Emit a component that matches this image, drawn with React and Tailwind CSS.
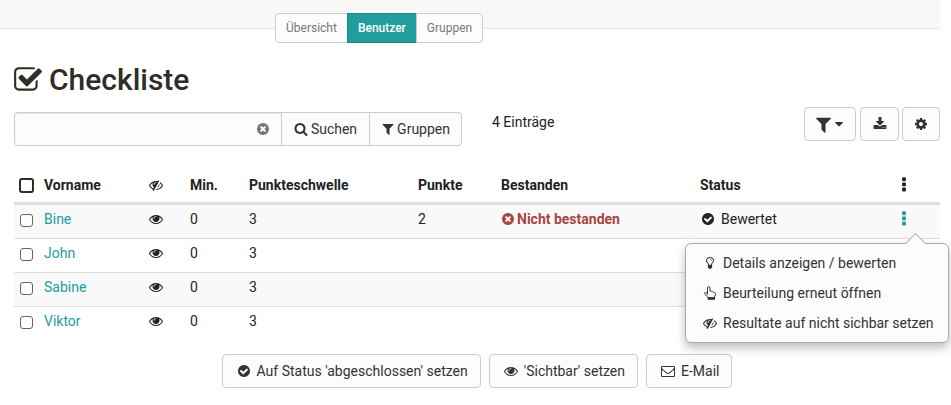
import React from "react";

const CIRCLE =
  "m0 0M1664 896q0 209-103 385.5t-279.5 279.5-385.5 103-385.5-103-279.5-279.5-103-385.5 103-385.5 279.5-279.5 385.5-103 385.5 103 279.5 279.5 103 385.5z";

const ICONS = {
  eye: "M1664 960q-152-236-381-353 61 104 61 225 0 185-131.5 316.5t-316.5 131.5-316.5-131.5-131.5-316.5q0-121 61-225-229 117-381 353 133 205 333.5 326.5t434.5 121.5 434.5-121.5 333.5-326.5zm-720-384q0-20-14-34t-34-14q-125 0-214.5 89.5t-89.5 214.5q0 20 14 34t34 14 34-14 14-34q0-86 61-147t147-61q20 0 34-14t14-34zm848 384q0 34-20 69-140 230-376.5 368.5t-499.5 138.5-499.5-139-376.5-368q-20-35-20-69t20-69q140-229 376.5-368t499.5-139 499.5 139 376.5 368q20 35 20 69z",
  eyeSlash:
    "M555 1335l78-141q-87-63-136-159t-49-203q0-121 61-225-229 117-381 353 167 258 427 375zm389-759q0-20-14-34t-34-14q-125 0-214.5 89.5t-89.5 214.5q0 20 14 34t34 14 34-14 14-34q0-86 61-147t147-61q20 0 34-14t14-34zm363-191q0 7-1 9-106 189-316 567t-315 566l-49 89q-10 16-28 16-12 0-134-70-16-10-16-28 0-12 44-87-143-65-263.5-173t-208.5-245q-20-31-20-69t20-69q153-235 380-371t496-136q89 0 180 17l54-97q10-16 28-16 5 0 18 6t31 15.5 33 18.5 31.5 18.5 19.5 11.5q16 10 16 27zm37 447q0 139-79 253.5t-209 164.5l280-502q8 45 8 84zm448 128q0 35-20 69-39 64-109 145-150 172-347.5 267t-419.5 95l74-132q212-18 392.5-137t301.5-307q-115-179-282-294l63-112q95 64 182.5 153t144.5 184q20 34 20 69z",
  checkSquare:
    "M1472 930v318q0 119-84.5 203.5t-203.5 84.5h-832q-119 0-203.5-84.5t-84.5-203.5v-832q0-119 84.5-203.5t203.5-84.5h832q63 0 117 25 15 7 18 23 3 17-9 29l-49 49q-10 10-23 10-3 0-9-2-23-6-45-6h-832q-66 0-113 47t-47 113v832q0 66 47 113t113 47h832q66 0 113-47t47-113v-254q0-13 9-22l64-64q10-10 23-10 6 0 12 3 20 8 20 29zm231-489l-814 814q-24 24-57 24t-57-24l-430-430q-24-24-24-57t24-57l110-110q24-24 57-24t57 24l263 263 647-647q24-24 57-24t57 24l110 110q24 24 24 57t-24 57z",
  timesCircle:
    "M1277 1122q0-26-19-45l-181-181 181-181q19-19 19-45 0-27-19-46l-90-90q-19-19-46-19-26 0-45 19l-181 181-181-181q-19-19-45-19-27 0-46 19l-90 90q-19 19-19 46 0 26 19 45l181 181-181 181q-19 19-19 45 0 27 19 46l90 90q19 19 46 19 26 0 45-19l181-181 181 181q19 19 45 19 27 0 46-19l90-90q19-19 19-46z" +
    CIRCLE,
  checkCircle:
    "M1412 734q0-28-18-46l-91-90q-19-19-45-19t-45 19l-408 407-226-226q-19-19-45-19t-45 19l-91 90q-18 18-18 46 0 27 18 45l362 362q19 19 45 19 27 0 46-19l543-543q18-18 18-45z" +
    CIRCLE,
  search:
    "M1216 832q0-185-131.5-316.5t-316.5-131.5-316.5 131.5-131.5 316.5 131.5 316.5 316.5 131.5 316.5-131.5 131.5-316.5zm512 832q0 52-38 90t-90 38q-54 0-90-38l-343-342q-179 124-399 124-143 0-273.5-55.5t-225-150-150-225-55.5-273.5 55.5-273.5 150-225 225-150 273.5-55.5 273.5 55.5 225 150 150 225 55.5 273.5q0 220-124 399l343 343q37 37 37 90z",
  filter:
    "M1595 295q17 41-14 70l-493 493v742q0 42-39 59-13 5-25 5-27 0-45-19l-256-256q-19-19-19-45v-486l-493-493q-31-29-14-70 17-39 59-39h1280q42 0 59 39z",
  download:
    "M1344 1344q0-26-19-45t-45-19-45 19-19 45 19 45 45 19 45-19 19-45zm256 0q0-26-19-45t-45-19-45 19-19 45 19 45 45 19 45-19 19-45zm128-224v320q0 40-28 68t-68 28h-1472q-40 0-68-28t-28-68v-320q0-40 28-68t68-28h465l135 136q58 56 136 56t136-56l136-136h464q40 0 68 28t28 68zm-325-569q17 41-14 70l-448 448q-18 19-45 19t-45-19l-448-448q-31-29-14-70 17-39 59-39h256v-448q0-26 19-45t45-19h256q26 0 45 19t19 45v448h256q42 0 59 39z",
  cog: "M1152 896q0-106-75-181t-181-75-181 75-75 181 75 181 181 75 181-75 75-181zm512-109v222q0 12-8 23t-20 13l-185 28q-19 54-39 91 35 50 107 138 10 12 10 25t-9 23q-27 37-99 108t-94 71q-12 0-26-9l-138-108q-44 23-91 38-16 136-29 186-7 28-36 28h-222q-14 0-24.5-8.5t-11.5-21.5l-28-184q-49-16-90-37l-141 107q-10 9-25 9-14 0-25-11-126-114-165-168-7-10-7-23 0-12 8-23 15-21 51-66.5t54-70.5q-27-50-41-99l-183-27q-13-2-21-12.5t-8-23.5v-222q0-12 8-23t19-13l186-28q14-46 39-92-40-57-107-138-10-12-10-24 0-10 9-23 26-36 98.5-107.5t94.5-71.5q13 0 26 10l138 107q44-23 91-38 16-136 29-186 7-28 36-28h222q14 0 24.5 8.5t11.5 21.5l28 184q49 16 90 37l142-107q9-9 24-9 13 0 25 10 129 119 165 170 7 8 7 22 0 12-8 23-15 21-51 66.5t-54 70.5q26 50 41 98l183 28q13 2 21 12.5t8 23.5z",
  ellipsis:
    "M1088 1248v192q0 40-28 68t-68 28h-192q-40 0-68-28t-28-68v-192q0-40 28-68t68-28h192q40 0 68 28t28 68zm0-512v192q0 40-28 68t-68 28h-192q-40 0-68-28t-28-68v-192q0-40 28-68t68-28h192q40 0 68 28t28 68zm0-512v192q0 40-28 68t-68 28h-192q-40 0-68-28t-28-68v-192q0-40 28-68t68-28h192q40 0 68 28t28 68z",
  envelope:
    "M1664 1504v-768q-32 36-69 66-268 206-426 338-51 43-83 67t-86.5 48.5-102.5 24.5h-2q-48 0-102.5-24.5t-86.5-48.5-83-67q-158-132-426-338-37-30-69-66v768q0 13 9.5 22.5t22.5 9.5h1472q13 0 22.5-9.5t9.5-22.5zm0-1051v-24.5l-.5-13-3-12.5-5.5-9-9-7.5-14-2.5h-1472q-13 0-22.5 9.5t-9.5 22.5q0 168 147 284 193 152 401 317 6 5 35 29.5t46 37.5 44.5 31.5 50.5 27.5 43 9h2q20 0 43-9t50.5-27.5 44.5-31.5 46-37.5 35-29.5q208-165 401-317 54-43 100.5-115.5t46.5-131.5zm128-37v1088q0 66-47 113t-113 47h-1472q-66 0-113-47t-47-113v-1088q0-66 47-113t113-47h1472q66 0 113 47t47 113z",
  bulb: "M1120 576q0 13-9.5 22.5t-22.5 9.5-22.5-9.5-9.5-22.5q0-46-54-71t-106-25q-13 0-22.5-9.5t-9.5-22.5 9.5-22.5 22.5-9.5q50 0 99.5 16t87 54 37.5 90zm160 0q0-72-34.5-134t-90-101.5-123-62-136.5-22.5-136.5 22.5-123 62-90 101.5-34.5 134q0 101 68 180 10 11 30.5 33t30.5 33q128 153 141 298h228q13-145 141-298 10-11 30.5-33t30.5-33q68-79 68-180zm128 0q0 155-103 268-45 49-74.5 87t-59.5 95.5-34 107.5q47 28 47 82 0 37-25 64 25 27 25 64 0 52-45 81 13 23 13 47 0 46-31.5 71t-77.5 25q-20 44-60 70t-87 26-87-26-60-70q-46 0-77.5-25t-31.5-71q0-24 13-47-45-29-45-81 0-37 25-64-25-27-25-64 0-54 47-82-4-50-34-107.5t-59.5-95.5-74.5-87q-103-113-103-268 0-99 44.5-184.5t117-142 164-89 186.5-32.5 186.5 32.5 164 89 117 142 44.5 184.5z",
  caret:
    "M1408 704q0 26-19 45l-448 448q-19 19-45 19t-45-19l-448-448q-19-19-19-45t19-45 45-19h896q26 0 45 19t19 45z",
};

function Icon({ name, className = "size-[14px]" }) {
  return (
    <svg viewBox="0 0 1792 1792" className={`shrink-0 ${className}`} fill="currentColor" fillRule="evenodd" aria-hidden="true">
      <path d={ICONS[name]} />
    </svg>
  );
}

function HandUp() {
  return (
    <svg viewBox="0 0 14 14" className="size-[14px] shrink-0" fill="none" stroke="currentColor" strokeLinejoin="round" aria-hidden="true">
      <path d="M4.5 8.7V2c0-.8.5-1.4 1.2-1.4S7 1.200 7 2v3.200c1-.3 1.600 0 1.900.6.9-.3 1.600 0 1.900.7 1-.2 1.700.3 1.700 1.400 0 1.600-.9 2.300-.9 3.600H5.200C4.500 9.800 1.400 8.900 1.400 7.400c0-.9.9-1.400 1.700-.9.6.3 1 .9 1.400 1.300" />
      <path d="M4.700 11h7.300v2.800H4.700z" fill="currentColor" stroke="none" />
    </svg>
  );
}

const BOX = "border border-[#ccc] bg-[#fcfcfc] text-[#333] cursor-pointer";
const BUTTON = `${BOX} flex h-[34px] items-center rounded`;

function RowCheckbox({ label, large }) {
  return (
    <input
      type="checkbox"
      aria-label={label}
      className={
        large
          ? "block size-[15px] appearance-none rounded-[3px] border-2 border-[#332b26] bg-white"
          : "mt-[3px] ml-px block size-[13px] appearance-none rounded-[3px] border border-[#666] bg-white"
      }
    />
  );
}

const MENU = [
  { icon: <Icon name="bulb" />, label: "Details anzeigen / bewerten" },
  { icon: <HandUp />, label: "Beurteilung erneut öffnen" },
  { icon: <Icon name="eyeSlash" />, label: "Resultate auf nicht sichbar setzen" },
];

function ActionMenu() {
  return (
    <div className="absolute top-[34px] -right-[36px] z-10 w-[264px] rounded-md border border-[#aaa] bg-[#fcfcfc] py-1 shadow-[0_5px_10px_rgba(0,0,0,0.25)]">
      <span className="absolute -top-[8px] right-[25px] size-[15px] rotate-45 border-t border-l border-[#aaa] bg-[#fcfcfc]" />
      <ul className="relative bg-[#fcfcfc]">
        {MENU.map((item) => (
          <li key={item.label}>
            <a href="#" className="flex h-[30px] items-center gap-1.5 pl-[17px] whitespace-nowrap text-[#333]">
              {item.icon}
              {item.label}
            </a>
          </li>
        ))}
      </ul>
    </div>
  );
}

const ROWS = [
  { name: "Bine", min: 0, limit: 3, points: 2, failed: true, rated: true, menu: true },
  { name: "John", min: 0, limit: 3 },
  { name: "Sabine", min: 0, limit: 3 },
  { name: "Viktor", min: 0, limit: 3 },
];

export default function App() {
  return (
    <div className="pr-[11px] font-['Roboto','Liberation_Sans',sans-serif] text-sm text-[#222]">
      <header className="h-[29px] border-b border-[#e7e7e7] bg-[#f8f8f8]" />
      <nav className="relative -mt-4 ml-[275px] flex h-[30px] w-max text-xs">
        <button className="rounded-l border border-[#ccc] bg-[#fcfcfc] px-[10px] text-[#777]">Übersicht</button>
        <button className="-ml-px border border-[#1c8a8a] bg-[#209d9d] px-[10px] font-medium text-white">Benutzer</button>
        <button className="-ml-px rounded-r border border-[#ccc] bg-[#fcfcfc] px-[10px] text-[#777]">Gruppen</button>
      </nav>

      <main className="pl-[14px]">
        <h1 className="mt-5 flex h-[34px] items-center gap-[6px] text-[30px] font-medium text-[#332b26]">
          <Icon name="checkSquare" className="-ml-px size-[30px]" />
          Checkliste
        </h1>

        <div className="mt-[10px] flex items-start">
          <form className="mt-[5px] flex h-[34px] w-[448px]" onSubmit={(e) => e.preventDefault()}>
            <div className="flex flex-1 items-center rounded-l border border-[#ccc] bg-[#fcfcfc] pr-[11px] shadow-[inset_0_1px_1px_rgba(0,0,0,0.075)]">
              <input type="text" aria-label="Suchen" className="h-full min-w-0 flex-1 bg-transparent px-3 outline-none" />
              <button type="button" aria-label="Leeren" className="text-[#777]">
                <Icon name="timesCircle" />
              </button>
            </div>
            <button className={`${BOX} -ml-px flex items-center gap-[3px] px-3`}>
              <Icon name="search" />
              Suchen
            </button>
            <button type="button" className={`${BOX} -ml-px flex items-center gap-0.5 rounded-r px-[11px]`}>
              <Icon name="filter" />
              Gruppen
            </button>
          </form>
          <p className="mt-[5px] ml-[30px] leading-5">4 Einträge</p>
          <div className="ml-auto flex">
            <button className={`${BUTTON} mr-1 w-[52px] justify-center`} aria-label="Filter">
              <Icon name="filter" className="size-[19px]" />
              <Icon name="caret" className="-ml-px size-[14px]" />
            </button>
            <button className={`${BUTTON} mr-[3px] w-[39px] justify-center`} aria-label="Herunterladen">
              <Icon name="download" />
            </button>
            <button className={`${BUTTON} w-[38px] justify-center`} aria-label="Einstellungen">
              <Icon name="cog" />
            </button>
          </div>
        </div>

        <table className="mt-[23px] w-full table-fixed border-collapse text-left leading-5">
          <colgroup>
            <col className="w-[25px]" />
            <col className="w-[105px]" />
            <col className="w-[41px]" />
            <col className="w-[59px]" />
            <col className="w-[169px]" />
            <col className="w-[83px]" />
            <col className="w-[199px]" />
            <col className="w-[195px]" />
            <col className="w-[50px]" />
          </colgroup>
          <thead>
            <tr className="h-[34px] border-b-3 border-[#ddd] *:px-[5px] *:font-bold">
              <th><RowCheckbox large label="Alle auswählen" /></th>
              <th>Vorname</th>
              <th aria-label="Sichtbarkeit"><Icon name="eyeSlash" /></th>
              <th>Min.</th>
              <th>Punkteschwelle</th>
              <th>Punkte</th>
              <th>Bestanden</th>
              <th>Status</th>
              <th aria-label="Aktionen"><Icon name="ellipsis" className="size-[18px]" /></th>
            </tr>
          </thead>
          <tbody>
            {ROWS.map((row) => (
              <tr key={row.name} className="h-[34px] border-t border-[#ddd] odd:bg-[#f9f9f9] *:px-[5px] *:pt-1 *:align-top first:h-[35px] first:border-t-0">
                <td><div className="pt-[2px]"><RowCheckbox label={`${row.name} auswählen`} /></div></td>
                <td><a href="#" className="text-[#209d9d]">{row.name}</a></td>
                <td><Icon name="eye" className="mt-[3px] size-[14px]" /></td>
                <td>{row.min}</td>
                <td>{row.limit}</td>
                <td>{row.points}</td>
                <td>
                  {row.failed && (
                    <span className="flex items-center gap-0.5 font-bold text-[#a94442]">
                      <Icon name="timesCircle" />
                      Nicht bestanden
                    </span>
                  )}
                </td>
                <td>
                  {row.rated && (
                    <span className="flex items-center gap-1.5 pl-px">
                      <Icon name="checkCircle" />
                      Bewertet
                    </span>
                  )}
                </td>
                <td>
                  {row.menu && (
                    <div className="relative w-[18px]">
                      <button aria-label="Aktionen" className="block pt-px text-[#209d9d]">
                        <Icon name="ellipsis" className="size-[18px]" />
                      </button>
                      <ActionMenu />
                    </div>
                  )}
                </td>
              </tr>
            ))}
          </tbody>
        </table>

        <div className="mt-[14px] flex justify-center gap-2">
          <button className={`${BUTTON} gap-1.5 pr-3 pl-[14px]`}>
            <Icon name="checkCircle" />
            Auf Status 'abgeschlossen' setzen
          </button>
          <button className={`${BUTTON} gap-1.5 pr-3 pl-[14px]`}>
            <Icon name="eye" />
            'Sichtbar' setzen
          </button>
          <button className={`${BUTTON} gap-1.5 pr-3 pl-[14px]`}>
            <Icon name="envelope" />
            E-Mail
          </button>
        </div>
      </main>
    </div>
  );
}
